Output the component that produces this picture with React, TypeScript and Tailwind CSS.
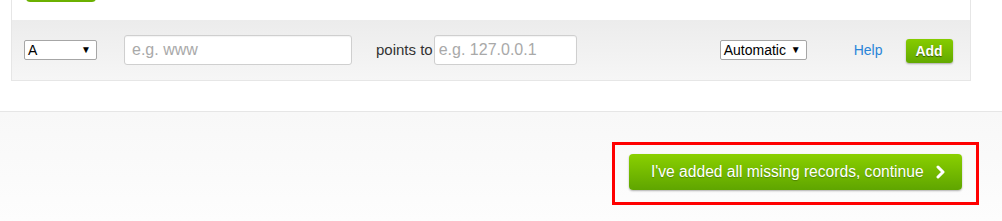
import React from 'react';

const font = { fontFamily: '"Liberation Sans", Arial, sans-serif' };

const FakeSelect: React.FC<{ label: string; width: string }> = ({ label, width }) => (
    <div
        className={`flex items-center justify-between h-[20px] ${width} border border-[#a6a6a6] rounded-[2px] bg-white pl-[3px] pr-[5px] text-[14px] text-black leading-none`}
    >
        <span>{label}</span>
        <span className="text-[10px]">▼</span>
    </div>
);

const App: React.FC = () => {
    return (
        <div className="w-[1002px] h-[221px] bg-white overflow-hidden" style={font}>
            {/* record editor panel */}
            <div className="ml-[11px] w-[960px] border-x border-b border-[#e6e6e6]">
                <div className="flex flex-col h-[20px] bg-white pl-[14px]">
                    <div className="w-[70px] h-[30px] -mt-[28px] rounded-[4px] bg-gradient-to-b from-[#8fd100] to-[#6aaf00]" />
                </div>
                <div className="flex items-center h-[60px] pl-[12px] bg-gradient-to-b from-[#ececec] to-[#f6f6f6]">
                    <FakeSelect label="A" width="w-[73px]" />
                    <input
                        className="ml-[27px] w-[228px] h-[30px] border border-[#cfcfcf] rounded-[3px] bg-white px-[7px] text-[16px] placeholder-[#a9a9a9] outline-none shadow-[inset_0_1px_1px_rgba(0,0,0,0.05)]"
                        placeholder="e.g. www"
                    />
                    <span className="ml-[24px] text-[15px] text-[#333]">points to</span>
                    <input
                        className="ml-[1px] w-[143px] h-[30px] border border-[#cfcfcf] rounded-[3px] bg-white px-[4px] text-[16px] placeholder-[#a9a9a9] outline-none shadow-[inset_0_1px_1px_rgba(0,0,0,0.05)]"
                        placeholder="e.g. 127.0.0.1"
                    />
                    <div className="ml-[143px]">
                        <FakeSelect label="Automatic" width="w-[87px]" />
                    </div>
                    <a href="#" className="ml-[47px] text-[14px] text-[#2a85d8]">Help</a>
                    <button className="ml-[23px] mt-[2px] w-[47px] h-[24px] rounded-[3px] bg-gradient-to-b from-[#86cc00] to-[#63a900] text-white font-bold text-[14px] shadow-[0_1px_2px_rgba(0,0,0,0.3)] [text-shadow:0_1px_1px_rgba(0,0,0,0.5)]">
                        Add
                    </button>
                </div>
            </div>

            {/* footer with continue action */}
            <div className="mt-[30px] border-t border-[#e6e6e6] h-[110px] bg-gradient-to-b from-[#f8f8f8] to-[#fdfdfd] flex justify-end pt-[30px] pr-[23px]">
                <div className="h-[63px] border-[3px] border-[#ff0000] pl-[14px] pr-[14px] pt-[9px]">
                    <button className="flex items-center w-[333px] h-[36px] rounded-[4px] bg-gradient-to-b from-[#8ad000] to-[#5fa500] shadow-[0_1px_2px_rgba(0,0,0,0.3)] pl-[22px] text-white text-[15.6px] [text-shadow:0_1px_1px_rgba(0,0,0,0.25)]">
                        <span>I've added all missing records, continue</span>
                        <svg className="ml-[12px]" width="10" height="14" viewBox="0 0 10 14">
                            <path d="M2 2 L7 7 L2 12" fill="none" stroke="white" strokeWidth="3" strokeLinecap="round" strokeLinejoin="round" />
                        </svg>
                    </button>
                </div>
            </div>
        </div>
    );
};

export default App;
